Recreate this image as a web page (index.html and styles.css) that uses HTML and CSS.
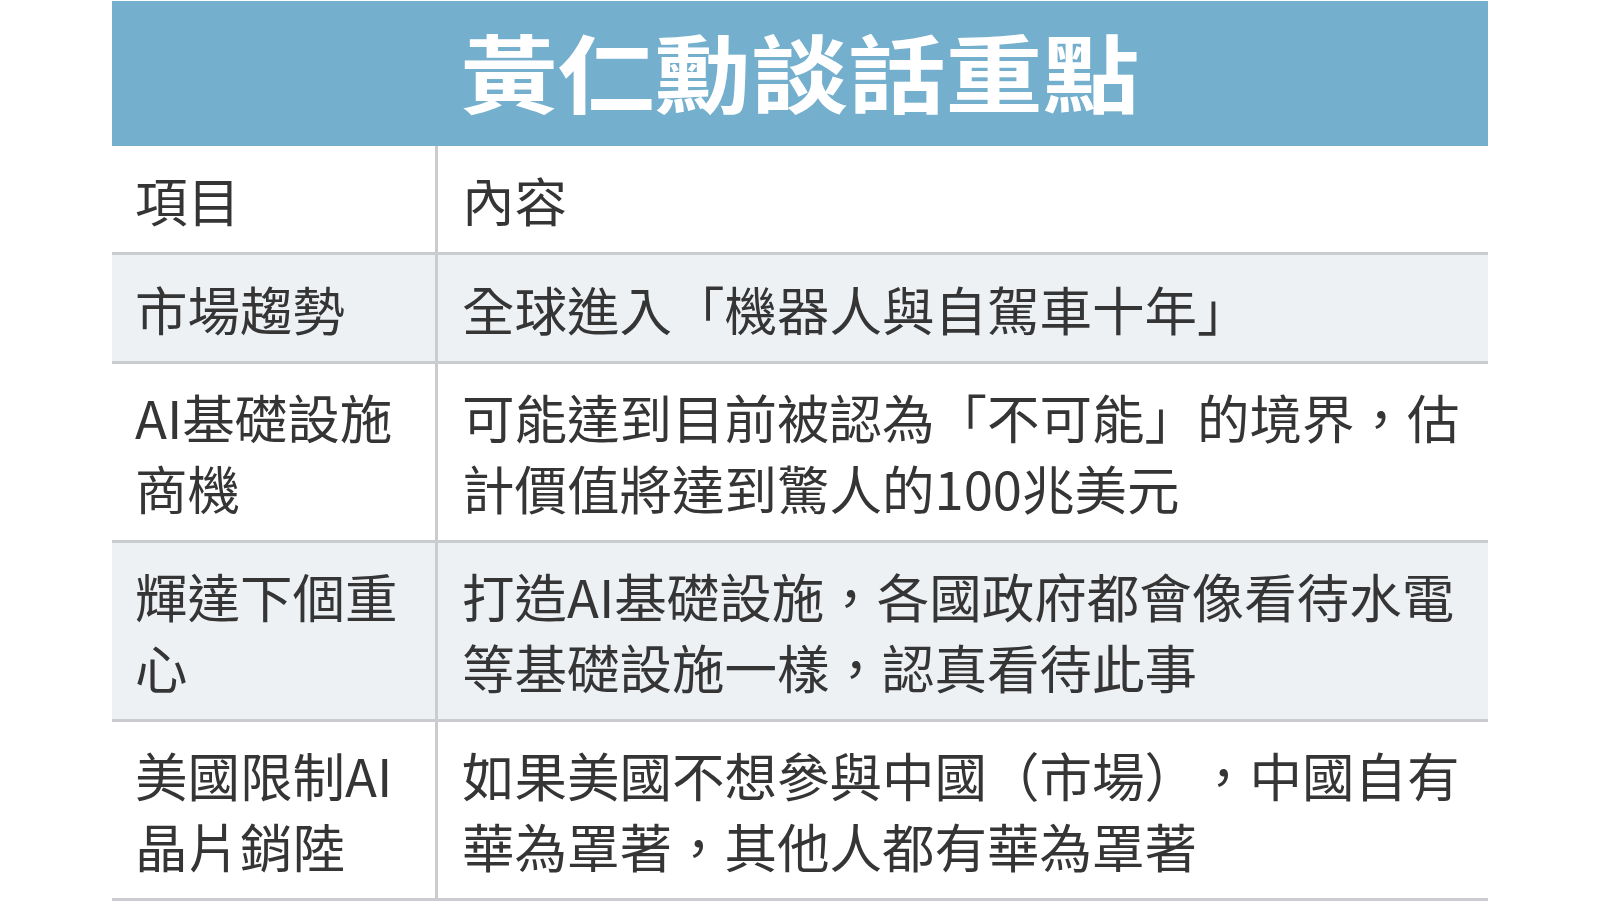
FILE: index.html
```html
<!DOCTYPE html>
<html lang="zh-Hant">
<head>
<meta charset="utf-8">
<title>黃仁勳談話重點</title>
<link rel="stylesheet" href="styles.css">
</head>
<body>
<div class="board">
  <div class="title"><span class="title-text">黃仁勳談話重點</span></div>
  <div class="grid">
    <div class="cell key one">項目</div>
    <div class="cell val one">內容</div>

    <div class="cell key one alt">市場趨勢</div>
    <div class="cell val one alt">全球進入「機器人與自駕車十年」</div>

    <div class="cell key">AI基礎設施<br>商機</div>
    <div class="cell val">可能達到目前被認為「不可能」的境界，估<br>計價值將達到驚人的100兆美元</div>

    <div class="cell key alt">輝達下個重<br>心</div>
    <div class="cell val alt">打造AI基礎設施，各國政府都會像看待水電<br>等基礎設施一樣，認真看待此事</div>

    <div class="cell key">美國限制AI<br>晶片銷陸</div>
    <div class="cell val">如果美國不想參與中國（市場），中國自有<br>華為罩著，其他人都有華為罩著</div>
  </div>
</div>
</body>
</html>
```

FILE: styles.css
```css
html, body {
  margin: 0;
  padding: 0;
  background: #ffffff;
}

body {
  font-family: "Noto Sans CJK TC", "Noto Sans CJK SC", "Noto Sans", sans-serif;
  color: #353535;
  text-spacing-trim: space-all;
  font-kerning: none;
}

.board {
  width: 1376px;
  margin: 1px auto 0;
}

.title {
  height: 145px;
  box-sizing: border-box;
  padding-bottom: 8px;
  background: #74afcd;
  color: #ffffff;
  font-size: 97px;
  font-weight: 700;
  line-height: 1;
  display: flex;
  align-items: center;
  justify-content: center;
}

.title-text {
  display: inline-block;
  transform: scaleY(0.88);
}

.grid {
  display: grid;
  grid-template-columns: 326px 1050px;
}

.cell {
  box-sizing: border-box;
  font-size: 52.5px;
  line-height: 71px;
  padding: 17px 0 17px 23px;
  border-bottom: 3px solid #cacccf;
  white-space: nowrap;
  display: flex;
  align-items: center;
}

.one {
  height: 109px;
  padding-top: 0;
  padding-bottom: 0;
}

.key {
  border-right: 3px solid #cacccf;
}

.val {
  padding-left: 24px;
}

.alt {
  background: #eef1f4;
}
```
